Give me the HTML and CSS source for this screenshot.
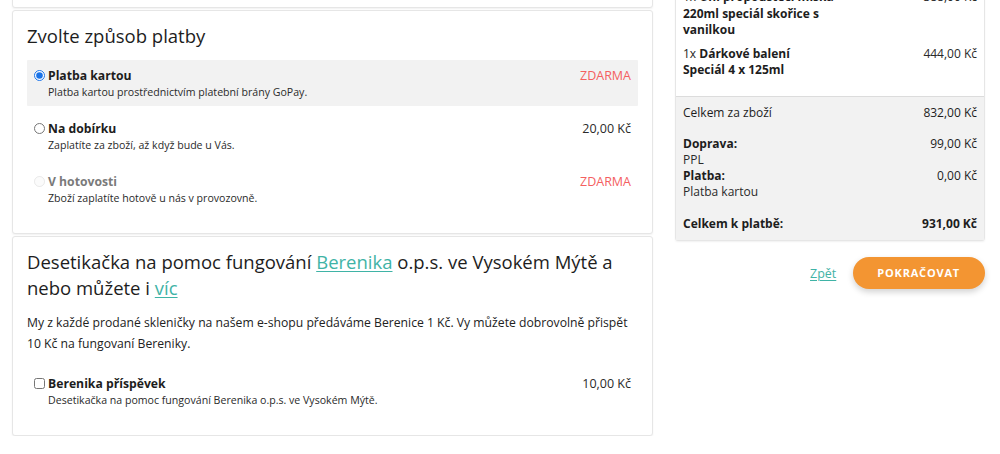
FILE: index.html
```html
<!DOCTYPE html>
<html lang="cs">
<head>
<meta charset="utf-8">
<title>Platba</title>
<link rel="stylesheet" href="styles.css">
</head>
<body>
<div class="page">
  <div class="main">
    <section class="card card-prev"></section>

    <section class="card">
      <h2 class="card-title">Zvolte způsob platby</h2>
      <div class="options">
        <label class="option selected">
          <input type="radio" name="pay" checked>
          <span class="opt-body">
            <span class="opt-title">Platba kartou</span>
            <span class="opt-desc">Platba kartou prostřednictvím platební brány GoPay.</span>
          </span>
          <span class="opt-price free">ZDARMA</span>
        </label>
        <label class="option">
          <input type="radio" name="pay">
          <span class="opt-body">
            <span class="opt-title">Na dobírku</span>
            <span class="opt-desc">Zaplatíte za zboží, až když bude u Vás.</span>
          </span>
          <span class="opt-price">20,00 Kč</span>
        </label>
        <label class="option disabled">
          <input type="radio" name="pay" disabled>
          <span class="opt-body">
            <span class="opt-title">V hotovosti</span>
            <span class="opt-desc">Zboží zaplatíte hotově u nás v provozovně.</span>
          </span>
          <span class="opt-price free">ZDARMA</span>
        </label>
      </div>
    </section>

    <section class="card">
      <h2 class="card-title">Desetikačka na pomoc fungování <a href="#" class="link">Berenika</a> o.p.s. ve Vysokém Mýtě a<br>nebo můžete i <a href="#" class="link">víc</a></h2>
      <p class="lead">My z každé prodané skleničky na našem e-shopu předáváme Berenice 1 Kč. Vy můžete dobrovolně přispět<br>10 Kč na fungovaní Bereniky.</p>
      <div class="options">
        <label class="option">
          <input type="checkbox">
          <span class="opt-body">
            <span class="opt-title">Berenika příspěvek</span>
            <span class="opt-desc">Desetikačka na pomoc fungování Berenika o.p.s. ve Vysokém Mýtě.</span>
          </span>
          <span class="opt-price">10,00 Kč</span>
        </label>
      </div>
    </section>
  </div>

  <aside class="side">
    <div class="summary">
      <div class="items">
        <div class="item">
          <div class="item-name">1x <b>Uni propouštěcí miska<br>220ml speciál skořice s<br>vanilkou</b></div>
          <div class="item-price">388,00 Kč</div>
        </div>
        <div class="item">
          <div class="item-name">1x <b>Dárkové balení<br>Speciál 4 x 125ml</b></div>
          <div class="item-price">444,00 Kč</div>
        </div>
      </div>
      <div class="totals">
        <div class="row"><span>Celkem za zboží</span><span>832,00 Kč</span></div>
        <div class="group">
          <div class="row"><b>Doprava:</b><span>99,00 Kč</span></div>
          <div class="row-sub">PPL</div>
          <div class="row"><b>Platba:</b><span>0,00 Kč</span></div>
          <div class="row-sub">Platba kartou</div>
        </div>
        <div class="row total"><span>Celkem k platbě:</span><span>931,00 Kč</span></div>
      </div>
    </div>
    <div class="actions">
      <a href="#" class="link back">Zpět</a>
      <button class="btn">POKRAČOVAT</button>
    </div>
  </aside>
</div>
</body>
</html>
```
FILE: styles.css
```css
* { box-sizing: border-box; }
html, body { margin: 0; padding: 0; background: #fff; }
body {
  font-family: "Open Sans", "Noto Sans", sans-serif;
  color: #1d1d1d;
  overflow: hidden;
}
.page {
  display: flex;
  align-items: flex-start;
  gap: 22px;
  padding: 0 15px 0 12px;
}
.main {
  width: 641px;
  display: flex;
  flex-direction: column;
  gap: 2px;
  margin-top: -40px;
}
.card {
  background: #fff;
  border: 1px solid #e6e6e6;
  border-radius: 3px;
  box-shadow: 0 1px 2px rgba(0,0,0,0.06);
  padding: 12px 14px 21px;
}
.card-prev { height: 48px; padding: 0; }
.card-title {
  margin: 0 0 11px;
  font-weight: 400;
  font-size: 18.5px;
  line-height: 26px;
  color: #1d1d1d;
}
.link { color: #3fb3a6; text-decoration: underline; text-underline-offset: 2px; text-decoration-thickness: 1px; }
.options { display: flex; flex-direction: column; gap: 7px; }
.option {
  display: flex;
  align-items: flex-start;
  padding: 8px 7px 6px 6px;
  border-radius: 1px;
  cursor: pointer;
}
.option.selected { background: #f2f2f2; }
.option input {
  width: 11px;
  height: 11px;
  margin: 2px 3px 0 1px;
  accent-color: #1a73e8;
  flex: none;
}
.opt-body { flex: 1; display: flex; flex-direction: column; }
.opt-title { font-weight: 700; font-size: 12.2px; line-height: 16px; }
.opt-desc { font-size: 10.6px; line-height: 16px; color: #2a2a2a; }
.opt-price { font-size: 12.5px; line-height: 16px; color: #2a2a2a; }
.opt-price.free { color: #f4605f; }
.option.disabled .opt-title { color: #7a7a7a; }
.option.disabled input { opacity: 0.45; }
.lead {
  margin: 0 0 14px;
  font-size: 12.2px;
  line-height: 21px;
  color: #222;
}

.side { width: 310px; margin-top: -22px; }
.summary {
  border: 1px solid #e6e6e6;
  border-radius: 3px;
  box-shadow: 0 1px 2px rgba(0,0,0,0.06);
  background: #fff;
  font-size: 12px;
  line-height: 16px;
}
.items { padding: 10px 7px 17px; display: flex; flex-direction: column; gap: 7px; }
.item { display: flex; justify-content: space-between; gap: 10px; line-height: 16.5px; }
.item-price { text-align: right; color: #2a2a2a; }
.totals {
  background: #f2f2f2;
  border-top: 1px solid #dcdcdc;
  padding: 8px 7px 8px;
}
.row { display: flex; justify-content: space-between; }
.group { margin: 15px 0 16px; }
.row-sub { color: #2a2a2a; }
.total { font-weight: 700; }
.actions {
  display: flex;
  justify-content: flex-end;
  align-items: center;
  gap: 17px;
  margin-top: 16px;
}
.back { font-size: 12.5px; line-height: 16px; margin-top: 3px; }
.btn {
  height: 32px;
  padding: 0 25px 0 24px;
  border: none;
  border-radius: 16px;
  background: #f39532;
  color: #fff;
  font-family: "Open Sans", sans-serif;
  font-weight: 700;
  font-size: 11px;
  letter-spacing: 0.8px;
  box-shadow: 0 3px 6px rgba(0,0,0,0.18);
  cursor: pointer;
}
```
